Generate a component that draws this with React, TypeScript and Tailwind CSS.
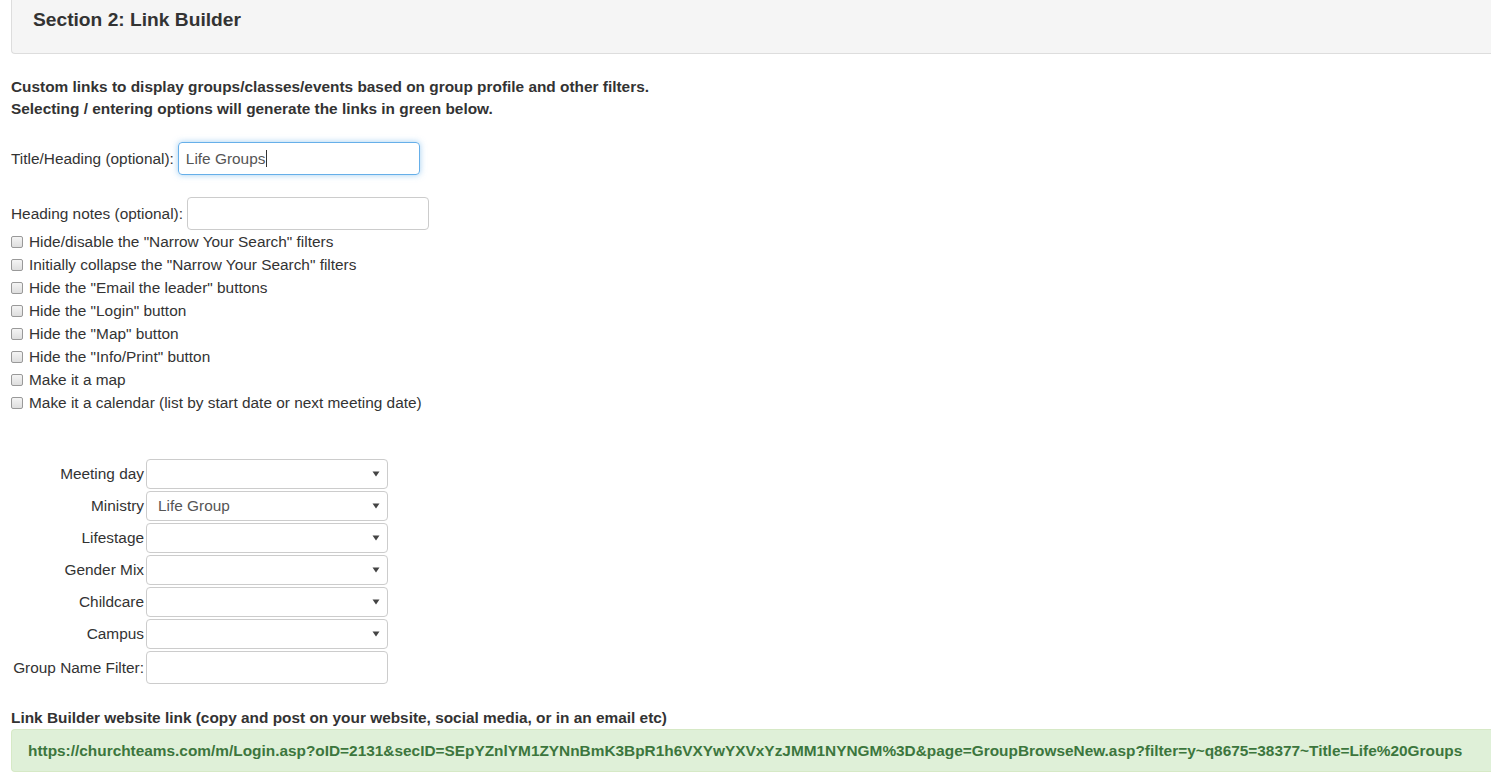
import React from 'react';

const checks = [
  'Hide/disable the "Narrow Your Search" filters',
  'Initially collapse the "Narrow Your Search" filters',
  'Hide the "Email the leader" buttons',
  'Hide the "Login" button',
  'Hide the "Map" button',
  'Hide the "Info/Print" button',
  'Make it a map',
  'Make it a calendar (list by start date or next meeting date)',
];

const selects = [
  { label: 'Meeting day', value: '' },
  { label: 'Ministry', value: 'Life Group' },
  { label: 'Lifestage', value: '' },
  { label: 'Gender Mix', value: '' },
  { label: 'Childcare', value: '' },
  { label: 'Campus', value: '' },
];

function SelectBox({ value }: { value: string }) {
  return (
    <div className="w-[242px] h-[30px] border border-[#ccc] rounded-[4px] bg-white flex items-center justify-between pl-[11px] pr-[6px] text-[15.4px] text-[#555]">
      <span>{value}</span>
      <svg width="8" height="6" viewBox="0 0 8 6" className="mr-[1px]">
        <path d="M0.5 0.5 L7.5 0.5 L4 5.5 Z" fill="#444" />
      </svg>
    </div>
  );
}

export default function App() {
  return (
    <div className="w-[1491px] h-[782px] overflow-hidden bg-white text-[#333] text-[15.4px]" style={{ fontFamily: '"Liberation Sans", Arial, sans-serif' }}>
      <div className="pl-[11px]">
        {/* panel header */}
        <div className="-mt-[14px] h-[68px] bg-[#f5f5f5] border border-[#ddd] border-r-0 rounded-l-[4px] flex items-center pl-[21px] pt-[1px]">
          <h3 className="text-[19.2px] font-bold text-[#333]">Section 2: Link Builder</h3>
        </div>

        <div className="mt-[22px] font-bold leading-[22px]">
          <div>Custom links to display groups/classes/events based on group profile and other filters.</div>
          <div>Selecting / entering options will generate the links in green below.</div>
        </div>

        <div className="mt-[22px] flex items-center">
          <span>Title/Heading (optional):</span>
          <div className="ml-[4px] w-[242px] h-[33px] border border-[#66afe9] rounded-[4px] shadow-[0_0_6px_rgba(102,175,233,0.6)] flex items-center pl-[7px] text-[#555]">
            Life Groups<span className="inline-block w-px h-[17px] bg-[#333] ml-px" />
          </div>
        </div>

        <div className="mt-[22px] flex items-center">
          <span>Heading notes (optional):</span>
          <div className="ml-[4px] w-[242px] h-[33px] border border-[#ccc] rounded-[4px] bg-white" />
        </div>

        <div className="flex flex-col">
          {checks.map((c) => (
            <label key={c} className="flex items-center h-[23px]">
              <span className="w-[12px] h-[12px] border border-[#999] rounded-[2px] bg-gradient-to-b from-[#f4f4f4] to-[#dedede] mr-[6px]" />
              {c}
            </label>
          ))}
        </div>

        <div className="mt-[45px] flex flex-col gap-[2px]">
          {selects.map((s) => (
            <div key={s.label} className="flex items-center">
              <span className="w-[135px] text-right pr-[2px]">{s.label}</span>
              <SelectBox value={s.value} />
            </div>
          ))}
          <div className="flex items-center">
            <span className="w-[135px] text-right pr-[2px] whitespace-nowrap">Group Name Filter:</span>
            <div className="w-[242px] h-[33px] border border-[#ccc] rounded-[4px] bg-white" />
          </div>
        </div>

        <div className="mt-[24px] font-bold leading-[20px]">
          Link Builder website link (copy and post on your website, social media, or in an email etc)
        </div>
        <div className="mt-[1px] h-[43px] bg-[#dff0d8] border border-[#d6e9c6] border-r-0 rounded-l-[4px] flex items-center pl-[16px] text-[#3c763d] font-bold whitespace-nowrap">
          https://churchteams.com/m/Login.asp?oID=2131&amp;secID=SEpYZnlYM1ZYNnBmK3BpR1h6VXYwYXVxYzJMM1NYNGM%3D&amp;page=GroupBrowseNew.asp?filter=y~q8675=38377~Title=Life%20Groups
        </div>
      </div>
    </div>
  );
}
